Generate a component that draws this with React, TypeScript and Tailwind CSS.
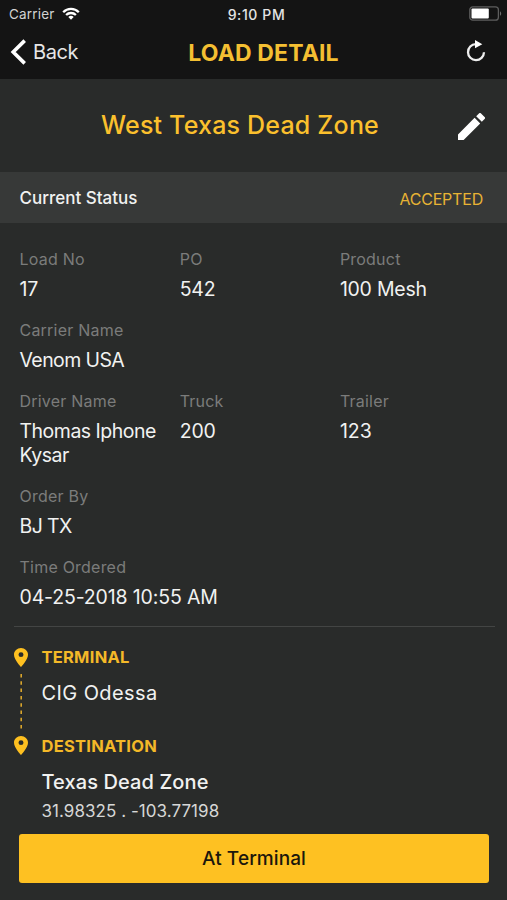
type FieldProps = { label: string; value: string; valueClass?: string };

function Field({ label, value, valueClass = "" }: FieldProps) {
  return (
    <div className="flex w-[160.2px] shrink-0 flex-col gap-2">
      <div className="h-5 text-[16px] leading-5 tracking-[0.22px] whitespace-nowrap text-[#7b7c7b]">{label}</div>
      <div className={`text-[19.5px] leading-6 whitespace-pre text-[#f1f2f1] ${valueClass}`}>{value}</div>
    </div>
  );
}

function Pin() {
  return (
    <svg className="block h-[19px] w-[14px]" viewBox="5 2 14 20" preserveAspectRatio="none" fill="#fec020">
      <path d="M12 2C8.13 2 5 5.13 5 9c0 5.25 7 13 7 13s7-7.75 7-13c0-3.87-3.13-7-7-7zm0 9.5a2.5 2.5 0 1 1 0-5 2.5 2.5 0 0 1 0 5z" />
    </svg>
  );
}

function StatusBar() {
  return (
    <div className="grid h-[27px] grid-cols-3 items-center pr-[5px] pl-[9px] text-[13.5px] text-[#e4e4e4]">
      <div className="flex items-center gap-[7px]">
        <span className="pt-px tracking-[0.2px] text-[#d2d2d2]">Carrier</span>
        <svg className="h-[13px] w-[18px]" viewBox="0 0 18 13" fill="none" stroke="#fff" strokeWidth="2.3">
          <path d="M1.2 5.2a11 11 0 0 1 15.6 0" />
          <path d="M4.1 8a7 7 0 0 1 9.8 0" />
          <path d="M9 12.7 6.3 10a3.9 3.9 0 0 1 5.4 0z" fill="#fff" stroke="none" />
        </svg>
      </div>
      <div className="pt-px pl-[2px] text-center text-[14px] font-medium tracking-[0.6px] whitespace-nowrap">9:10 PM</div>
      <div className="flex justify-end">
        <svg className="h-[15px] w-[33px]" viewBox="0 0 33 15">
          <rect x="0.8" y="0.8" width="28.6" height="13.4" rx="3" fill="none" stroke="#5e5e5e" strokeWidth="1.3" />
          <rect x="2.5" y="2.6" width="17.3" height="9.8" rx="1" fill="#fff" />
          <path d="M31 5.2c1.6.7 1.6 3.9 0 4.6z" fill="#6e6e6e" />
        </svg>
      </div>
    </div>
  );
}

export default function App() {
  return (
    <div className="flex h-[900px] w-[507px] flex-col overflow-hidden bg-[#292b2a] font-['Inter','Liberation_Sans',sans-serif]">
      <header className="h-[79px] shrink-0 bg-[#141414]">
        <StatusBar />
        <div className="grid h-[50px] grid-cols-[160px_1fr_140px] items-center">
          <div className="flex items-center gap-[7px] pb-px pl-[10px]">
            <svg className="h-[26px] w-4" viewBox="0 0 16 26" fill="none" stroke="#fff" strokeWidth="3.6">
              <path d="M14.7 1.6 3.2 13l11.5 11.4" />
            </svg>
            <span className="text-[20px] tracking-[-0.4px] text-[#e6e6e6]">Back</span>
          </div>
          <h1 className="pt-[2px] text-center text-[23px] font-bold tracking-[0.15px] whitespace-nowrap text-[#f4bf32]">LOAD DETAIL</h1>
          <div className="flex justify-end pr-[21.5px] pb-[2px]">
            <svg className="h-[22px] w-[20px]" viewBox="0 0 20 22" fill="none">
              <path d="M11 4.1H9.8A8 8 0 1 0 18 12.3" stroke="#eee" strokeWidth="2.3" />
              <path d="M9 0l7.3 4.3-7.3 4z" fill="#fff" />
            </svg>
          </div>
        </div>
      </header>

      <section className="grid h-[93px] shrink-0 grid-cols-[32px_1fr_59px] items-center">
        <h2 className="col-start-2 pt-px text-center text-[25px] font-medium tracking-[0.2px] whitespace-nowrap text-[#fbc02d]">West Texas Dead Zone</h2>
        <svg className="mt-[2px] ml-[10px] h-[27px] w-[27px]" viewBox="3 3 18 18" fill="#fff">
          <path d="M3 17.25V21h3.75L17.81 9.94l-3.75-3.75L3 17.25zM20.71 7.04a1 1 0 0 0 0-1.41l-2.34-2.34a1 1 0 0 0-1.41 0l-1.83 1.83 3.75 3.75 1.83-1.83z" />
        </svg>
      </section>

      <section className="flex h-[51px] shrink-0 items-center justify-between bg-[#373938] pr-6 pl-[19.5px]">
        <span className="pt-[2px] text-[17px] font-medium text-[#f1f2f1]">Current Status</span>
        <span className="pt-[3px] text-[16px] tracking-[-0.2px] text-[#e7b334]">ACCEPTED</span>
      </section>

      <section className="flex shrink-0 flex-col gap-[19px] pt-[26px] pl-[19.5px]">
        <div className="flex">
          <Field label="Load No" value="17" valueClass="tracking-[-0.2px]" />
          <Field label="PO" value="542" valueClass="tracking-[-0.2px]" />
          <Field label="Product" value="100 Mesh" valueClass="tracking-[-0.25px]" />
        </div>
        <Field label="Carrier Name" value="Venom USA" valueClass="tracking-[-0.6px]" />
        <div className="flex">
          <Field label="Driver Name" value={"Thomas Iphone\nKysar"} valueClass="tracking-[-0.5px]" />
          <Field label="Truck" value="200" valueClass="tracking-[-0.2px]" />
          <Field label="Trailer" value="123" />
        </div>
        <Field label="Order By" value="BJ TX" valueClass="tracking-[-0.6px]" />
        <Field label="Time Ordered" value="04-25-2018 10:55 AM" valueClass="tracking-[-0.15px]" />
      </section>

      <div className="mt-[17px] mr-[12px] ml-[14px] h-px shrink-0 bg-[#434544]" />

      <section className="flex h-[207px] shrink-0 pl-[14px]">
        <div className="flex w-[27.5px] shrink-0 flex-col pt-[21px]">
          <Pin />
          <svg className="my-[7px] block h-[55px] w-[14px]" viewBox="0 0 14 55">
            <path d="M7.2 0v55" stroke="#d9a52c" strokeWidth="1.6" strokeDasharray="3.5 3.8" />
          </svg>
          <Pin />
        </div>
        <div className="flex flex-col pt-[20px] whitespace-nowrap text-[#f1f2f1]">
          <div className="text-[16.5px] leading-5 font-bold tracking-[0.25px] text-[#f4b928]">TERMINAL</div>
          <div className="mt-[14px] text-[20px] leading-6 tracking-[0.4px]">CIG Odessa</div>
          <div className="mt-[31px] text-[16.5px] leading-5 font-bold tracking-[0.25px] text-[#f4b928]">DESTINATION</div>
          <div className="mt-[14px] text-[20px] leading-6 font-medium tracking-[0.1px]">Texas Dead Zone</div>
          <div className="mt-[7px] text-[17px] leading-5 tracking-[0.05px] text-[#d6d7d6]">31.98325 . -103.77198</div>
        </div>
      </section>

      <button className="mr-[18px] ml-[19px] h-[49px] shrink-0 rounded-[3px] bg-[#fec122] pt-[2px] text-[19px] font-medium tracking-[0.1px] text-[#1b170c]">
        At Terminal
      </button>
    </div>
  );
}
